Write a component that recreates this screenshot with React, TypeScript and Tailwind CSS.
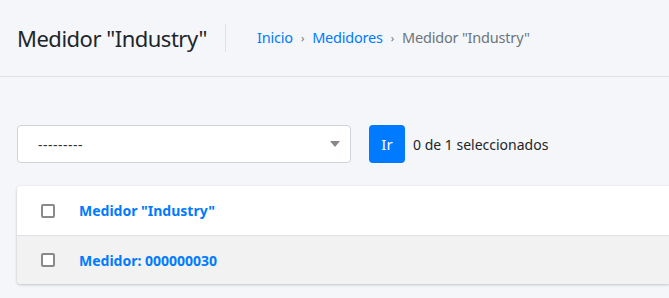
export default function App() {
  const rows = [
    { label: 'Medidor "Industry"', bg: "bg-white" },
    { label: "Medidor: 000000030", bg: "bg-[#f2f2f2]" },
  ];

  return (
    <div className="min-h-[298px] w-[669px] overflow-hidden bg-[#f4f6f9] font-['Noto_Sans',sans-serif] text-[#212529]">
      <header className="flex h-[77px] items-center border-b border-[#dee2e6] pl-[17px]">
        <h1 className="pr-[18px] text-[22px] leading-none tracking-[-0.5px] text-[#212529]">Medidor "Industry"</h1>
        <div className="h-[28px] w-px bg-[#dee2e6]" />
        <nav className="ml-[31px] flex items-center gap-[8px] text-[14.5px] tracking-[-0.2px]">
          <a className="text-[#007bff]">Inicio</a>
          <span className="text-[11px] text-[#6c757d]">›</span>
          <a className="text-[#007bff]">Medidores</a>
          <span className="text-[11px] text-[#6c757d]">›</span>
          <span className="text-[#6c757d]">Medidor "Industry"</span>
        </nav>
      </header>

      <div className="flex items-center pl-[17px] pt-[48px]">
        <div className="flex h-[38px] w-[334px] items-center justify-between rounded-[4px] border border-[#ced4da] bg-white pl-[20px] pr-[10px]">
          <span className="text-[14px] tracking-[0.5px] text-[#333]">---------</span>
          <svg width="10" height="6" viewBox="0 0 10 6">
            <path d="M0 0h10L5 6z" fill="#888" />
          </svg>
        </div>
        <button className="ml-[18px] flex h-[38px] w-[36px] items-center justify-center rounded-[4px] bg-[#007bff] text-[15px] text-white">
          Ir
        </button>
        <span className="ml-[8px] text-[14px] text-[#212529]">0 de 1 seleccionados</span>
      </div>

      <div className="ml-[17px] mt-[23px] overflow-hidden rounded-l-[4px] bg-white shadow-[0_0_1px_rgba(0,0,0,0.125),0_1px_3px_rgba(0,0,0,0.2)]">
        {rows.map((r, i) => (
          <div
            key={r.label}
            className={`flex h-[49px] items-center ${r.bg} ${i > 0 ? "border-t border-[#dee2e6]" : ""}`}
          >
            <span className="ml-[24px] h-[14px] w-[14px] rounded-[2px] border-2 border-[#8a8a8a] bg-white" />
            <a className="ml-[24px] text-[14px] font-bold text-[#007bff]">{r.label}</a>
          </div>
        ))}
      </div>
    </div>
  );
}
